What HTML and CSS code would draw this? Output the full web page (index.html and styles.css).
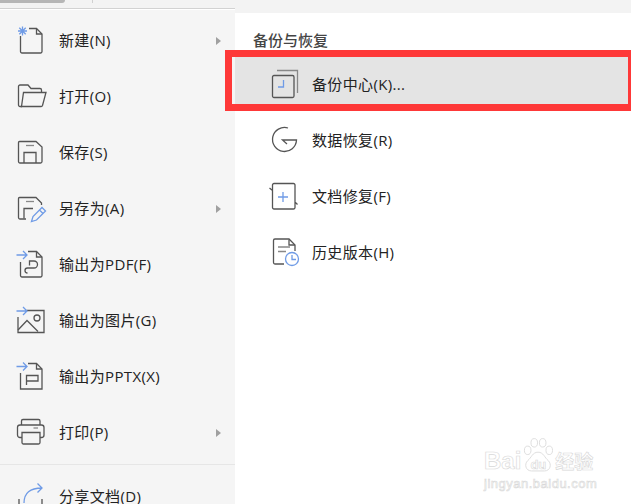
FILE: index.html
```html
<!DOCTYPE html>
<html lang="zh">
<head>
<meta charset="utf-8">
<title>备份与恢复</title>
<link rel="stylesheet" href="styles.css">
</head>
<body>
<header class="topbar">
  <div class="tab"></div>
  <div class="tab-sep"></div>
</header>
<div class="body">
  <nav class="menu">
    <div class="row">
      <svg class="icon" viewBox="0 0 32 32"><path class="k" d="M4.500 11V26.500a1.500 1.500 0 0 0 1.500 1.500H24.500a1.500 1.500 0 0 0 1.500-1.500V9L20.500 3.500H13"/><path class="k" d="M20.500 4V9H26"/><path class="b" d="M6.500 1.500V10.500M2 6H11M3.300 2.800L9.700 9.200M9.700 2.800L3.300 9.200"/></svg>
      <span class="label">新建(N)</span><span class="arrow"></span>
    </div>
    <div class="row">
      <svg class="icon" viewBox="0 0 32 32"><path class="k" d="M6 25.500H4A1.500 1.500 0 0 1 2.500 24V5.500A1.500 1.500 0 0 1 4 4H12L15 7.500H24A1.500 1.500 0 0 1 25.500 9V11"/><path class="k" d="M7.500 11.500H30L26.500 24.500A1.500 1.500 0 0 1 25 25.500H5.500L7.500 11.500Z"/></svg>
      <span class="label">打开(O)</span>
    </div>
    <div class="row">
      <svg class="icon" viewBox="0 0 32 32"><path class="k" d="M3.500 4.500H20L26 10V24.500A1.500 1.500 0 0 1 24.500 26H4A1.500 1.500 0 0 1 2.500 24.500V5.500A1 1 0 0 1 3.500 4.500Z"/><path class="k" d="M8 26V15.500H20V26"/><path class="g" d="M10 8.500H18"/></svg>
      <span class="label">保存(S)</span>
    </div>
    <div class="row">
      <svg class="icon" viewBox="0 0 32 32"><path class="k" d="M10 26H4A1.500 1.500 0 0 1 2.500 24.500V5.500A1 1 0 0 1 3.500 4.500H20L25.500 10V12"/><path class="k" d="M8 25.500V15.500H17"/><path class="g" d="M10 8.500H18"/><path class="b" d="M15.500 28.500L17 23.500L26 14.500L29.500 18L20.500 27L15.500 28.500ZM23.500 17L27 20.500"/></svg>
      <span class="label">另存为(A)</span><span class="arrow"></span>
    </div>
    <div class="row">
      <svg class="icon" viewBox="0 0 32 32"><path class="k" d="M4.500 13V26.500a1.500 1.500 0 0 0 1.500 1.500H24.500a1.500 1.500 0 0 0 1.500-1.500V8L20.500 2.500H12"/><path class="k" d="M20.500 3V8H26"/><path class="k" d="M11.500 24a2.500 2.500 0 1 1 0-5H18a3.500 3.500 0 0 0 0-7H13.500V16.500"/><path class="b" d="M0.500 6H11M7 2L11 6L7 10"/></svg>
      <span class="label">输出为PDF(F)</span>
    </div>
    <div class="row">
      <svg class="icon" viewBox="0 0 32 32"><path class="k" d="M10.500 5.500H28V27.500H2V12"/><path class="k" d="M2 25L11 15.500L22 26.500"/><circle class="k" cx="21" cy="13" r="3"/><path class="b" d="M0.500 6H11M7 2L11 6L7 10"/></svg>
      <span class="label">输出为图片(G)</span>
    </div>
    <div class="row">
      <svg class="icon" viewBox="0 0 32 32"><path class="k" d="M4.500 12V28H26V8L20.500 2.500H12"/><path class="k" d="M20.500 3V8H26"/><path class="k" d="M10.500 24V14.500H22V20H11"/><path class="b" d="M0.500 5.500H11M7 1.500L11 5.500L7 9.500"/></svg>
      <span class="label">输出为PPTX(X)</span>
    </div>
    <div class="row">
      <svg class="icon" viewBox="0 0 32 32"><path class="k" d="M6 20.500H4A2.500 2.500 0 0 1 1.500 18V10.500A2.500 2.500 0 0 1 4 8H25.500A2.500 2.500 0 0 1 28 10.500V18A2.500 2.500 0 0 1 25.500 20.500H24"/><path class="k" d="M5.500 8V4A1.500 1.500 0 0 1 7 2.500H22.500A1.500 1.500 0 0 1 24 4V8"/><path class="k" d="M6 15.500H24V25.500A1.500 1.500 0 0 1 22.500 27H7.500A1.500 1.500 0 0 1 6 25.500Z"/><path class="g" d="M17.500 11H22"/></svg>
      <span class="label">打印(P)</span><span class="arrow"></span>
    </div>
    <div class="divider"></div>
    <div class="row row-last">
      <svg class="icon" viewBox="0 0 32 32"><path class="k" d="M3 18V30H26V18"/><path class="b" d="M8 22C8 12 14 7 26 7M21.500 2.500L26 7L21.500 11.500"/></svg>
      <span class="label">分享文档(D)</span>
    </div>
  </nav>
  <section class="panel">
    <h2 class="title">备份与恢复</h2>
    <div class="sub-row sub-active">
      <svg class="icon" viewBox="0 0 32 32"><rect class="k" x="4.500" y="6.500" width="21.500" height="22" rx="1.500"/><path class="g" d="M9 1.500H29.500V24"/><path class="b" d="M10 18H15.500V11"/></svg>
      <span class="label">备份中心(K)...</span>
    </div>
    <div class="sub-row">
      <svg class="icon" viewBox="0 0 32 32"><path class="k" d="M20 3A12 12 0 1 0 28.500 15H14.500L19 19"/></svg>
      <span class="label">数据恢复(R)</span>
    </div>
    <div class="sub-row">
      <svg class="icon" viewBox="0 0 32 32"><path class="k" d="M1.500 7L4.500 9.500V26.500A1.500 1.500 0 0 0 6 28H25.500A1.500 1.500 0 0 0 27 26.500V21L29.500 23.500M27 21V4A1.500 1.500 0 0 0 25.500 2.500H6A1.500 1.500 0 0 0 4.500 4V9.500"/><path class="b" d="M10 16H20M15 11V21"/></svg>
      <span class="label">文档修复(F)</span>
    </div>
    <div class="sub-row">
      <svg class="icon" viewBox="0 0 32 32"><path class="k" d="M16 27H7A1.500 1.500 0 0 1 5.500 25.500V3.500A1.500 1.500 0 0 1 7 2H21L27 8V14"/><path class="k" d="M21 2.500V8H27"/><path class="g" d="M10 10H22M10 14.500H18"/><circle class="b" cx="24" cy="22" r="6.500"/><path class="b" d="M24 18V22.500H28"/></svg>
      <span class="label">历史版本(H)</span>
    </div>
    <div class="callout"></div>
  </section>
</div>
<div class="watermark">
  <div class="wm-brand"><span>Bai</span><span class="wm-paw"><svg class="wm-paw-art" viewBox="0 0 32 36"><ellipse class="wm-toe" cx="5" cy="13" rx="3.500" ry="4.500"/><ellipse class="wm-toe" cx="12" cy="5" rx="3.500" ry="4.500"/><ellipse class="wm-toe" cx="21" cy="5" rx="3.500" ry="4.500"/><ellipse class="wm-toe" cx="28" cy="13" rx="3.500" ry="4.500"/><path class="wm-toe" d="M16 15C10 15 9 21 5 24C1 28 3 35 9 35H23C29 35 31 28 27 24C23 21 22 15 16 15Z"/></svg><span class="wm-du">du</span></span><span class="wm-cn">经验</span></div>
  <div class="wm-url">jingyan.baidu.com</div>
</div>
</body>
</html>
```
FILE: styles.css
```css
* { box-sizing: border-box; }
html, body { margin: 0; padding: 0; }
body {
  width: 631px;
  height: 504px;
  overflow: hidden;
  position: relative;
  background: #fff;
  color: #222;
  font-family: "Open Sans", "Noto Sans CJK SC", sans-serif;
  font-size: 15px;
}
.topbar {
  height: 13px;
  background: #f3f3f3;
  display: flex;
  align-items: flex-start;
}
.tab {
  width: 65px;
  height: 3px;
  background: #b6b6b6;
  border-bottom-right-radius: 3px;
}
.tab-sep {
  width: 1px;
  height: 3px;
  margin-left: 27px;
  background: #d0d0d0;
}
.body {
  display: flex;
  height: 491px;
}
.menu {
  width: 235px;
  flex: none;
  margin-top: -5px;
  height: 496px;
  padding-top: 4px;
  background: #f5f5f5;
  border-top: 1px solid #d2d2d2;
  box-shadow: inset 0 1px 0 #fff;
}
.row {
  height: 56px;
  display: flex;
  align-items: center;
  padding: 0 14px 0 16px;
  position: relative;
}
.row .label { margin-left: 11px; }
.row-last { margin-top: 4px; }
.icon {
  width: 32px;
  height: 32px;
  flex: none;
}
.k, .g, .b { fill: none; stroke-width: 1.300; }
.k { stroke: #555; }
.g { stroke: #888; }
.b { stroke: #6f9be6; }
.label {
  line-height: 20px;
  padding-bottom: 2px;
  white-space: nowrap;
  letter-spacing: .35px;
}
.arrow {
  margin-left: auto;
  width: 0;
  height: 0;
  border-left: 5px solid #a0a0a0;
  border-top: 4px solid transparent;
  border-bottom: 4px solid transparent;
}
.divider {
  height: 1px;
  background: #e6e6e6;
  margin-top: 3px;
}
.panel {
  flex: 1;
  position: relative;
  padding: 15px 0 0 0;
}
.title {
  margin: 0 0 5px 18px;
  height: 24px;
  line-height: 24px;
  font-size: 15px;
  font-weight: 500;
  color: #444;
}
.sub-row {
  height: 56px;
  display: flex;
  align-items: center;
  padding-left: 33px;
}
.sub-row .label { margin-left: 12px; }
.sub-active {
  height: 47px;
  padding-top: 9px;
  margin-bottom: 9px;
  background: #e4e4e4;
}
.callout {
  position: absolute;
  left: -10px;
  top: 37px;
  width: 406px;
  height: 61px;
  border: 7px solid #fe3838;
  border-right-width: 3px;
}
.watermark {
  position: absolute;
  left: 484px;
  top: 446px;
  width: 140px;
  color: #fff;
  -webkit-text-stroke: .6px #d8d8d8;
  font-family: "Liberation Sans", "Noto Sans CJK SC", sans-serif;
}
.wm-brand {
  display: flex;
  align-items: center;
  font-size: 24px;
  line-height: 30px;
  font-weight: 700;
}
.wm-paw {
  position: relative;
  width: 30px;
  height: 30px;
  margin: 0 2px;
  font-size: 13px;
  display: flex;
  align-items: flex-end;
  justify-content: center;
}
.wm-paw-art {
  position: absolute;
  left: 0;
  bottom: 4px;
  width: 30px;
  height: 34px;
}
.wm-toe { fill: #fff; stroke: #dcdcdc; stroke-width: 1; }
.wm-du {
  position: relative;
  line-height: 22px;
}
.wm-cn {
  font-size: 19px;
  font-family: "Noto Sans CJK SC", sans-serif;
}
.wm-url {
  font-size: 13px;
  line-height: 16px;
  letter-spacing: .5px;
}
```
